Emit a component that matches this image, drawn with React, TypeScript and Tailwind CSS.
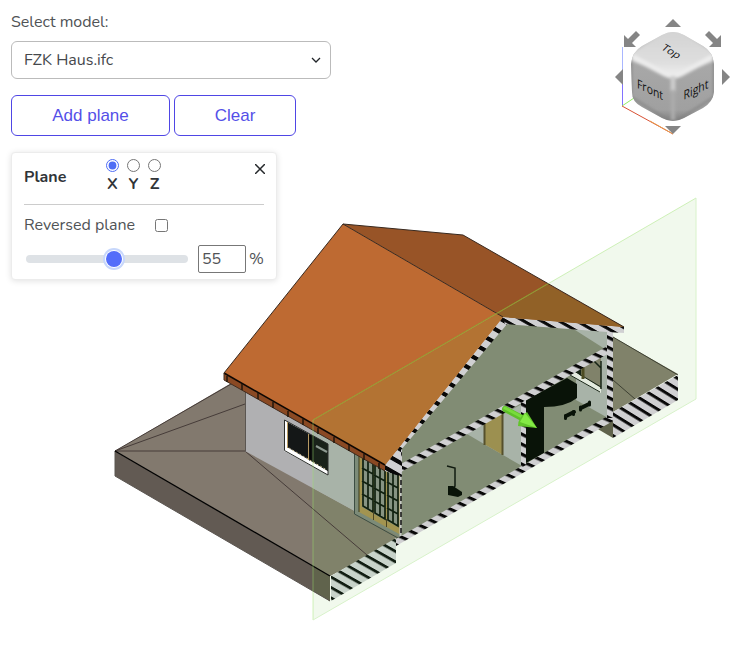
import { useState } from "react";

function Hatch({ id, period, bar, slope, offset, base, ink }: { id: string; period: number; bar: number; slope: number; offset: number; base: string; ink: string }) {
  return (
    <pattern id={id} width="20" height={period} patternUnits="userSpaceOnUse" patternTransform={`matrix(1 ${slope} 0 1 0 ${offset})`}>
      <rect width="20" height={period} fill={base} />
      <rect width="20" height={bar} fill={ink} />
    </pattern>
  );
}

const doorPanels = [
  { x: 362, y: 458 },
  { x: 374, y: 465 },
  { x: 387, y: 472 },
];

const fasciaJoints = [227, 242, 258, 273, 288, 303, 318, 334, 349, 364, 379];

function House() {
  return (
    <svg className="absolute inset-0 h-full w-full" viewBox="0 0 750 650" preserveAspectRatio="xMidYMin meet" role="img" aria-label="Sectioned house model">
      <defs>
        <Hatch id="slab" period={10} bar={3.4} slope={0.45} offset={4.8} base="#d0d0d2" ink="#080808" />
        <Hatch id="ground" period={10.4} bar={3.2} slope={0.57} offset={2} base="#c8d3ca" ink="#111d12" />
        <Hatch id="earth" period={10.8} bar={3.5} slope={0.62} offset={10.6} base="#d0d0d2" ink="#080808" />
        <Hatch id="wall" period={10} bar={3.6} slope={0.5} offset={1.5} base="#d0d0d2" ink="#080808" />
        <Hatch id="rafter" period={13.4} bar={4.8} slope={0.57} offset={4.4} base="#d0d0d2" ink="#080808" />
        <Hatch id="roof" period={10.1} bar={3.5} slope={0.57} offset={0.5} base="#d0d0d2" ink="#080808" />
      </defs>

      {/* section plane */}
      <polygon points="313,420 696,198 696,399 313,620" fill="#f1f9ed" />

      {/* terrain */}
      <polygon points="115,451 245,375 400,470 400,538 330,576" fill="#82796e" />
      <polygon points="115,451 330,576 330,601 115,476" fill="#625a53" />
      <polygon points="313,440 400,490 400,538 330,576 313,566" fill="#80826a" />
      <polygon points="313,566 330,576 330,601 313,591" fill="#60634c" />
      <path d="M115 451L245 376M115 451L245 404M115 451H245L367 555" fill="none" stroke="#463c39" />
      <path d="M115 451V476L330 601" fill="none" stroke="#5b5651" />
      <path d="M115 451L330 576" stroke="#000" strokeWidth="1.3" />
      <polygon points="331,576 396,538 396,563 331,601" fill="url(#ground)" />
      <polygon points="613,337 678,374 613,412" fill="#80826a" />
      <polygon points="596,428 613,418 613,438" fill="#60634c" />
      <path d="M613 337L678 375M613 380L635 399" stroke="#3d4032" />
      <polygon points="613,412 678,375 678,400 613,438" fill="url(#earth)" />

      {/* facade */}
      <polygon points="245,388 402,473 402,537 245,451" fill="#b0b0b2" />
      <polygon points="313,425 402,473 402,537 313,488" fill="#a8b3a8" />
      <path d="M245.500 391V451" stroke="#5b5651" />
      <polygon points="284,420 328,444 328,475 284,451" fill="#fff" />
      <polygon points="287,422 328,444 328,471 287,447" fill="#141717" />
      <polygon points="313,436 328,444 328,471 313,462" fill="#192219" />
      <path d="M328 444V475L284.500 450.500V420L328 444" fill="none" stroke="#2a2d2a" />
      <path d="M287.500 422V448M308.500 434V460" stroke="#b79a63" />
      <path d="M310.500 435V461" stroke="#050505" strokeWidth="2" />
      <path d="M316 446L327 452" stroke="#8d9990" strokeWidth="2" />
      <path d="M289 448L327 470" stroke="#c8b98f" strokeDasharray="2 2" />

      {/* glazed doors */}
      <polygon points="354,450 402,473 402,538 354,514" fill="#7c8b78" />
      <polygon points="359,453 401,474 401,535 359,512" fill="#a29450" />
      {doorPanels.map(({ x, y }) => (
        <g key={x}>
          <polygon points={`${x},${y - 6} ${x + 11},${y} ${x + 11},${y + 55} ${x},${y + 49}`} fill="#879483" />
          <path
            d={`M${x + 1} ${y - 4}V${y + 48}L${x + 11} ${y + 54}V${y}M${x + 6} ${y}V${y + 51}M${x} ${y + 10}l11 6M${x} ${y + 23}l11 6M${x} ${y + 36}l11 6`}
            fill="none"
            stroke="#10200f"
            strokeWidth="1.700"
          />
        </g>
      ))}
      <path d="M373.500 512V520M386.500 519V527" stroke="#4c4522" />
      <path d="M354.500 451V514L398 538" fill="none" stroke="#3c4d43" />
      <path d="M359 453V512" stroke="#3b3a1c" />

      {/* interior */}
      <polygon points="505,321 611,331 611,418 522,468 401,538 401,446" fill="#818c74" />
      <polygon points="572,328 608,331 608,351" fill="#a8b3a8" />
      <polygon points="467,434 500,416 522,404 522,466 503,455 484,444" fill="#a8b3a8" />
      <polygon points="484,423 503,412 503,455 484,444" fill="#9c9050" />
      <path d="M484.500 423V445M502.500 413V455" stroke="#55502c" strokeWidth="2" />
      <polygon points="576,367 608,350 608,418 576,400" fill="#a8b3a8" />
      <polygon points="568,374 575,370 601,386 601,393" fill="#e4ebdf" />
      <polygon points="573,370 601,356 601,388" fill="#80826a" />
      <path d="M601 361V389M594 361L601 368" fill="none" stroke="#172416" strokeWidth="1.500" />
      <path d="M574 371L601 387M570 375L600 392" stroke="#172416" />
      <path d="M574 370L581 366V376z" fill="#172416" />
      <path d="M583 365V379" stroke="#4d4c22" strokeWidth="3" />
      <path d="M526 400L567 378L577 384V398Q566 407 544 407V453L526 463Z" fill="#091308" />
      <path d="M566 416L574 412M581 408L589 404" stroke="#091308" strokeWidth="4" strokeLinecap="round" />
      <path d="M565.500 415.500v3M573.500 411.500v3M580.500 407v3M589.500 402v3" stroke="#091308" strokeWidth="3" strokeLinecap="round" />
      <path d="M447 466l8 2v18l-2 3" fill="none" stroke="#111b10" strokeWidth="1.500" />
      <path d="M448 486l5 0l9 6l0 3l-4 2-10-2z" fill="#091308" />

      {/* cut surfaces */}
      <polygon points="401,464 611,344 611,352 401,472" fill="url(#slab)" />
      <polygon points="396,539 613,413 613,421 396,546" fill="url(#slab)" />
      <polygon points="521,403 526,400 526,465 521,468" fill="url(#wall)" />
      <polygon points="607,331 613,331 613,418 607,418" fill="url(#wall)" />
      <polygon points="396,450 402,444 402,472 396,475" fill="url(#wall)" />
      <path d="M400.500 472V536" stroke="#c8cbc7" strokeWidth="2" />
      <path d="M401 472V536" stroke="#111" strokeWidth="1.500" strokeDasharray="5 3" />
      <polygon points="503,317 508,323 401,450 402,476 396,475 385,471 385,465" fill="url(#rafter)" />
      <polygon points="503,317 624,327 624,333 607,332 505,324" fill="url(#roof)" />

      {/* roof */}
      <polygon points="343,224 503,317 385,465 224,373" fill="#be6a32" />
      <polygon points="343,224 463,235 624,327 503,317" fill="#985427" />
      <polygon points="313,420 497,313 503,317 385,465 313,424" fill="#b37333" />
      <polygon points="497,313 547,284 624,327 503,317" fill="#916127" />
      <polygon points="224,373 385,465 385,471 224,380" fill="#8a4923" />
      <path d="M224 373L385 465" stroke="#0d0703" strokeWidth="1.500" />
      <path d="M224 380L385 471M224 373V380" stroke="#402c1f" fill="none" />
      <path d="M224 373L343 224L463 235L624 327M343 224L503 317" fill="none" stroke="#38291f" />
      {fasciaJoints.map((x) => (
        <path key={x} d={`M${x} ${Math.round(374 + (x - 224) * 0.571)}v6`} stroke="#22170d" strokeWidth="1.500" />
      ))}

      {/* plane outline */}
      <path d="M313 620V420L696 198" fill="none" stroke="#9be36c" strokeOpacity=".45" />
      <path d="M313 420L547 284" stroke="#8e9a28" strokeOpacity=".7" />
      <path d="M696 198V399L313 620" fill="none" stroke="#d8f2ca" />

      {/* normal handle */}
      <path d="M505 409L522 418" stroke="#5fc02a" strokeWidth="6" strokeLinecap="round" />
      <path d="M505 408L522 417" stroke="#78dc3b" strokeWidth="3" strokeLinecap="round" />
      <path d="M527 412L537 428L518 426Q518 417 527 412z" fill="#62c52b" />
      <path d="M525 413L537 428L520 422z" fill="#84ea45" />
    </svg>
  );
}

function ViewCube() {
  return (
    <svg className="absolute top-0 right-0 h-[150px] w-[150px]" viewBox="600 0 150 150" role="img" aria-label="View cube">
      <defs>
        <linearGradient id="topFace" x1="0" y1="0" x2="0" y2="1">
          <stop offset="0" stopColor="#d2d2d2" />
          <stop offset=".7" stopColor="#dedede" />
          <stop offset="1" stopColor="#efefef" />
        </linearGradient>
        <linearGradient id="sideFace" x1="0" y1="0" x2="0" y2="1">
          <stop offset="0" stopColor="#d9d9d9" />
          <stop offset=".35" stopColor="#a8a8a8" />
          <stop offset=".85" stopColor="#a0a0a0" />
          <stop offset="1" stopColor="#777" />
        </linearGradient>
        <filter id="soften"><feGaussianBlur stdDeviation="1.500" /></filter>
        <clipPath id="body">
          <path d="M662 35Q673 29 684 35L703 46Q713 52 714 64V92Q713 102 703 108L684 118Q673 124 662 118L642 107Q632 102 632 92L631 64Q632 52 642 46Z" />
        </clipPath>
      </defs>
      <path d="M622.500 47V106" stroke="#8272ff" />
      <path d="M622.500 47V75" stroke="#a9b6ff" />
      <path d="M622 106L634 98" stroke="#91ed64" />
      <path d="M622 106L673 134" stroke="#d95235" />
      <path d="M650 121L673 134" stroke="#e99b4b" />
      <g clipPath="url(#body)">
        <rect x="630" y="30" width="86" height="94" fill="url(#sideFace)" />
        <g filter="url(#soften)">
          <path d="M630 54L673 28L716 54V60L680 75Q673 79 666 75L630 60Z" fill="url(#topFace)" />
          <path d="M633 57L665 74Q673 78 681 74L712 57" fill="none" stroke="#ececec" strokeWidth="5" />
          <path d="M673 76V92" stroke="#ccc" strokeWidth="5" />
          <path d="M673 90V120" stroke="#acacac" strokeWidth="4" />
          <path d="M631 58V97L673 123L714 97V58" fill="none" stroke="#838383" strokeWidth="2" />
        </g>
      </g>
      <g fill="#858585">
        <path d="M673 19L681 27H665Z" />
        <path d="M673 134L681 126H665Z" />
        <path d="M615 77L623 69V85Z" />
        <path d="M730 77L722 69V85Z" />
        <path d="M624 47V35L628 39L636 31L640 35L632 43L636 47Z" />
        <path d="M721 47V35L717 39L709 31L705 35L713 43L709 47Z" />
      </g>
      <g fill="#111" fontFamily="Open Sans, sans-serif" fontSize="12" textAnchor="middle">
        <text transform="matrix(.8 .5 -.6 .6 669 54)">Top</text>
        <text transform="matrix(.87 .42 0 1.05 650 94)">Front</text>
        <text transform="matrix(.87 -.42 0 1.05 696 94)">Right</text>
      </g>
    </svg>
  );
}

export default function App() {
  const [axis, setAxis] = useState("X");
  const [value, setValue] = useState(55);
  const [reversed, setReversed] = useState(false);
  return (
    <main className="relative min-h-screen overflow-hidden bg-white font-['Nunito','Open_Sans',sans-serif] text-base text-[#505356]">
      <House />
      <ViewCube />
      <div className="relative flex w-80 flex-col pt-2.5 pl-[11px]">
        <label htmlFor="model" className="leading-6">Select model:</label>
        <div className="relative mt-[7px] w-80">
          <select id="model" className="block h-[38px] w-full appearance-none rounded-md border border-[#bbb] bg-white px-3 text-[#45484c]">
            <option>FZK Haus.ifc</option>
          </select>
          <svg className="pointer-events-none absolute top-[13px] right-2 size-3" viewBox="0 0 12 12" fill="none" stroke="#212529" strokeWidth="1.300" aria-hidden="true"><path d="M1 4l4 4 4-4" /></svg>
        </div>
        <div className="mt-4 flex gap-1 font-['Liberation_Sans',sans-serif] text-[17px] text-[#5450e8]">
          <button className="h-[41px] w-[159px] rounded-md border border-[#4f46e5] bg-white">Add plane</button>
          <button className="h-[41px] w-[122px] rounded-md border border-[#4f46e5] bg-white">Clear</button>
        </div>
        <section className="mt-4 w-[266px] rounded-sm border border-[#ececec] bg-white px-3 pb-1.5 shadow-[0_1px_6px_rgba(0,0,0,0.12)]">
          <div className="flex h-[52px] items-center border-b border-[#ccc] pb-1 font-bold text-[#303438]">
            <h2 className="w-[82px]">Plane</h2>
            <div className="flex gap-2">
              {["X", "Y", "Z"].map((name) => (
                <label key={name} className="flex w-[13px] flex-col items-center gap-0.5 leading-5">
                  <input type="radio" name="axis" className="size-[13px] accent-[#4f6df5]" checked={axis === name} onChange={() => setAxis(name)} />
                  {name}
                </label>
              ))}
            </div>
            <button aria-label="Remove plane" className="-mr-px mb-4 ml-auto size-2.5">
              <svg className="size-2.5" viewBox="0 0 10 10" stroke="#25282b" strokeWidth="1.500" aria-hidden="true"><path d="M0 0l10 10M10 0L0 10" /></svg>
            </button>
          </div>
          <div className="flex h-10 items-center">
            <label htmlFor="reversed" className="w-[131px]">Reversed plane</label>
            <input id="reversed" type="checkbox" className="size-[13px]" checked={reversed} onChange={() => setReversed(!reversed)} />
          </div>
          <div className="flex h-7 items-center">
            <input
              type="range"
              aria-label="Plane position"
              value={value}
              onChange={(event) => setValue(Number(event.target.value))}
              className="ml-0.5 h-2 w-[162px] shrink-0 appearance-none rounded-full bg-[#dee2e6] [&::-webkit-slider-thumb]:size-4 [&::-webkit-slider-thumb]:appearance-none [&::-webkit-slider-thumb]:rounded-full [&::-webkit-slider-thumb]:bg-[#536dfa] [&::-webkit-slider-thumb]:shadow-[0_0_0_1px_#fff,0_0_0_3px_#c7d7fb]"
            />
            <input aria-label="Plane percentage" value={value} onChange={(event) => setValue(Number(event.target.value))} className="ml-2.5 h-7 w-12 shrink-0 rounded-xs border border-[#777] bg-white px-[3px]" />
            <span className="ml-[3px]">%</span>
          </div>
        </section>
      </div>
    </main>
  );
}
